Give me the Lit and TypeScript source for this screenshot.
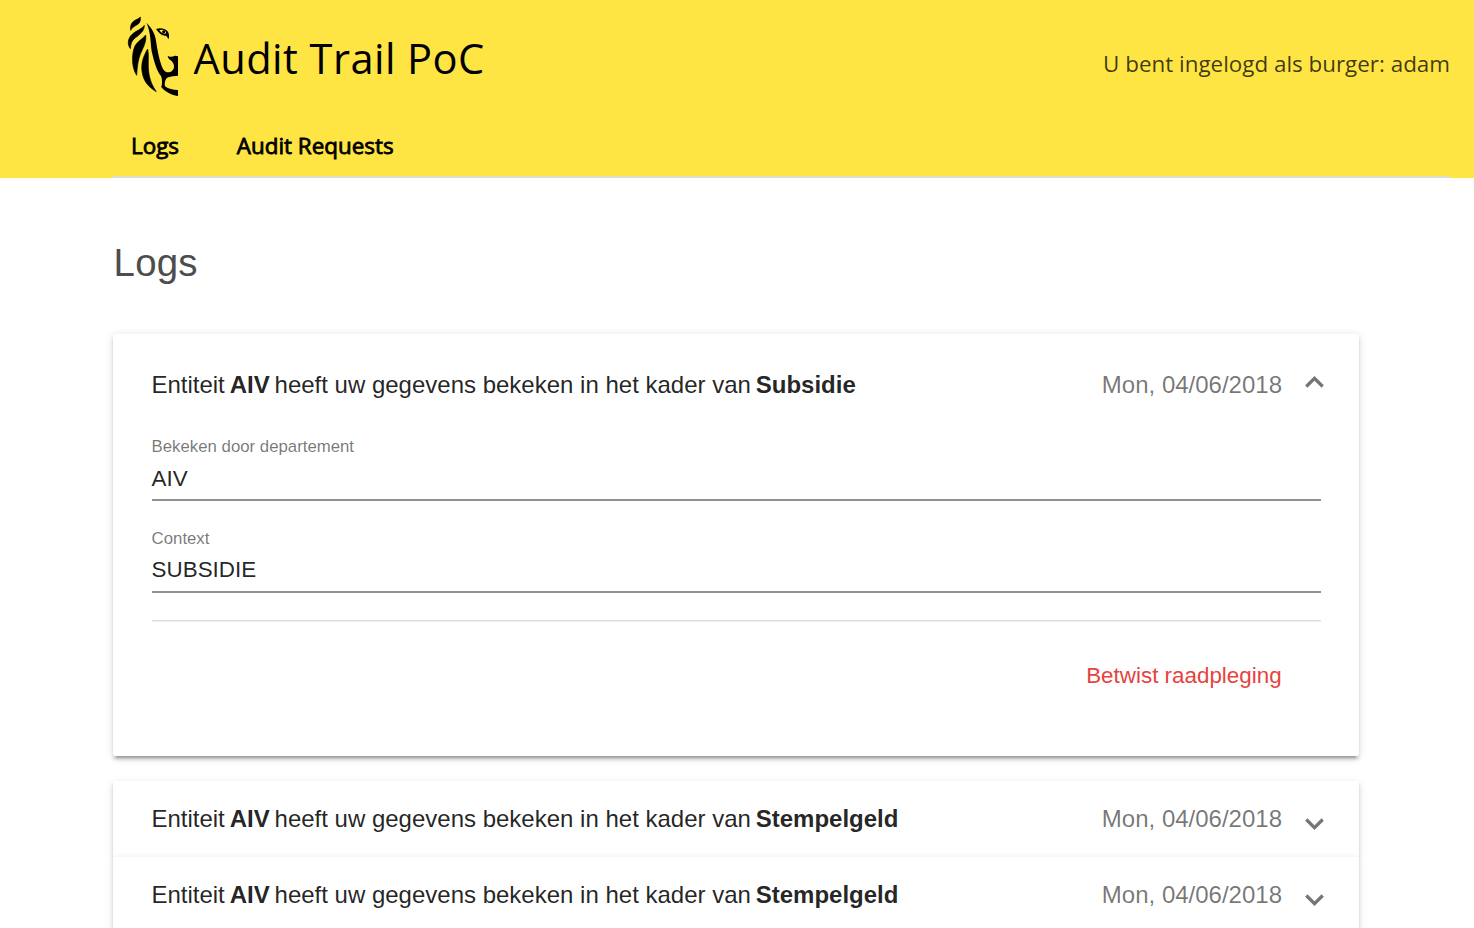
import { LitElement, html, css, svg } from "lit";
import { customElement, property } from "lit/decorators.js";

interface LogEntry {
  entity: string;
  context: string;
  date: string;
}

@customElement("app-logo")
class AppLogo extends LitElement {
  static styles = css`
    :host { display: block; width: 80px; height: 96px; }
    svg { display: block; }
    .mane { stroke: #000; stroke-width: 2; stroke-linejoin: round; }
  `;
  render() {
    return html`<svg width="80" height="96" viewBox="0 0 240 288">
      ${svg`
      <g class="mane">
      <path d="M76 27C77 38 75 46 65 51C56 56 50 60 47 67C45 55 49 43 58 38C64 34 71 33 76 27Z"/>
      <path d="M88 52C82 62 68 66 55 76C41 86 34 106 46 122C47 108 50 98 60 90C74 80 88 70 88 52Z"/>
      <path d="M92 81C84 92 70 98 61 112C50 134 48 176 65 202C67 178 68 158 77 136C86 116 95 100 92 81Z"/>
      <path d="M98 123C84 146 78 168 81 190C85 222 104 240 124 251C108 228 102 208 100 180C99 160 102 142 98 123Z"/>
      </g>
      <path d="M94 44C110 60 120 76 123 98C128 132 135 164 144 183C151 195 160 194 168 191C173 188 176 184 177 178C178 168 173 162 167 157C162 154 159 150 158 143C166 148 172 147 178 144C182 143 186 144 189 145V203C178 204 168 205 160 208C151 212 148 222 150 235C160 243 174 246 189 246V264C166 262 148 248 139 238C142 226 142 214 138 204C125 190 117 160 110 130C106 100 107 70 94 44Z"/>
      <path fill-rule="evenodd" d="M123 63C134 59 149 60 157 69C163 76 163 84 161 94C158 89 156 85 152 83C142 84 132 76 123 63ZM133 67C137 74 146 79 153 76C154 72 150 67 143 66C139 65 136 66 133 67Z"/>
      <circle cx="146" cy="71" r="4.5"/>`}
    </svg>`;
  }
}

@customElement("log-panel")
class LogPanel extends LitElement {
  @property({ attribute: false }) entry!: LogEntry;
  @property({ type: Boolean, reflect: true }) expanded = false;

  static styles = css`
    :host {
      display: block;
      box-sizing: border-box;
      background: #fff;
      color: rgba(0, 0, 0, 0.87);
      box-shadow: 0 4.8px 1.6px -3.2px rgba(0, 0, 0, 0.2),
        0 3.2px 3.2px 0 rgba(0, 0, 0, 0.14), 0 1.6px 8px 0 rgba(0, 0, 0, 0.12);
    }
    :host([expanded]) { height: 421.6px; margin-bottom: 25px; border-radius: 2px; }
    .head {
      display: flex;
      align-items: center;
      height: 76.4px;
      padding: 0 34px 0 38.4px;
      font-size: 24px;
    }
    :host([expanded]) .head { height: 102px; }
    .title { flex: 1; white-space: pre; }
    .title b { margin: 0 -1.8px; }
    .date { color: rgba(0, 0, 0, 0.54); }
    .chevron { display: block; margin-left: 22px; margin-top: 10px; }
    :host([expanded]) .chevron { margin-top: -6px; }
    .body { padding: 1px 38.4px 0 38.6px; }
    .field { height: 62px; margin-bottom: 27.5px; border-bottom: 2px solid #919191; }
    .label { font-size: 16.8px; line-height: 20px; color: rgba(0, 0, 0, 0.54); }
    .value { font-size: 22.4px; line-height: 26px; margin-top: 8.5px; }
    .rule { height: 1px; background: #dcdcdc; box-shadow: 0 1px #f0f0f0; margin-bottom: 42px; }
    .actions { text-align: right; padding-right: 39px; font-size: 22.4px; line-height: 26px; color: #e64340; }
  `;

  render() {
    const { entity, context, date } = this.entry;
    return html`
      <div class="head">
        <div class="title">Entiteit <b>${entity}</b> heeft uw gegevens bekeken in het kader van <b>${context}</b></div>
        <div class="date">${date}</div>
        <svg class="chevron" width="21" height="14" viewBox="0 0 21 14" fill="none" stroke="#757575" stroke-width="3.2">
          <path d=${this.expanded ? "M2.3 11.5L10.5 3.3L18.7 11.5" : "M2.3 2.5L10.5 10.7L18.7 2.5"} />
        </svg>
      </div>
      ${this.expanded
        ? html`<div class="body">
            <div class="field"><div class="label">Bekeken door departement</div><div class="value">${entity}</div></div>
            <div class="field"><div class="label">Context</div><div class="value">${context.toUpperCase()}</div></div>
            <div class="rule"></div>
            <div class="actions">Betwist raadpleging</div>
          </div>`
        : null}
    `;
  }
}

@customElement("app-root")
class AppRoot extends LitElement {
  static styles = css`
    :host {
      display: block;
      height: 928px;
      overflow: hidden;
      background: #fff;
      font-family: "Liberation Sans", Arial, sans-serif;
    }
    header {
      box-sizing: border-box;
      height: 178px;
      padding: 8px 24px 0 112px;
      background: #ffe544;
      font-family: "Open Sans", sans-serif;
      display: flex;
      flex-direction: column;
    }
    .brand { display: flex; align-items: center; height: 104px; padding-left: 3px; }
    app-logo { margin-bottom: 8px; }
    .name { font-size: 41.6px; line-height: 56px; margin-left: -1.5px; margin-bottom: 4px; letter-spacing: 0.45px; color: #000; flex: 1; white-space: nowrap; }
    .user { font-size: 22.4px; line-height: 30px; margin-top: 8px; color: rgba(0, 0, 0, 0.75); white-space: nowrap; }
    nav {
      flex: 1;
      display: flex;
      gap: 57.8px;
      padding: 19px 0 0 19px;
      border-bottom: 2px solid #dcdcd0;
      font-size: 22.4px;
      line-height: 30px;
      color: #000;
      -webkit-text-stroke: 0.8px #000;
    }
    main { padding: 62px 115px 0 113px; }
    h1 { margin: 0 0 48px; padding-left: 0.6px; font-size: 38.4px; line-height: 46px; letter-spacing: 0.2px; font-weight: 400; color: #4d4d4d; height: 46px; }
  `;

  private logs: LogEntry[] = [
    { entity: "AIV", context: "Subsidie", date: "Mon, 04/06/2018" },
    { entity: "AIV", context: "Stempelgeld", date: "Mon, 04/06/2018" },
    { entity: "AIV", context: "Stempelgeld", date: "Mon, 04/06/2018" },
  ];

  render() {
    return html`
      <header>
        <div class="brand">
          <app-logo></app-logo>
          <div class="name">Audit Trail PoC</div>
          <div class="user">U bent ingelogd als burger: adam</div>
        </div>
        <nav><span>Logs</span><span>Audit Requests</span></nav>
      </header>
      <main>
        <h1>Logs</h1>
        ${this.logs.map((entry, i) => html`<log-panel .entry=${entry} ?expanded=${i === 0}></log-panel>`)}
      </main>
    `;
  }
}
